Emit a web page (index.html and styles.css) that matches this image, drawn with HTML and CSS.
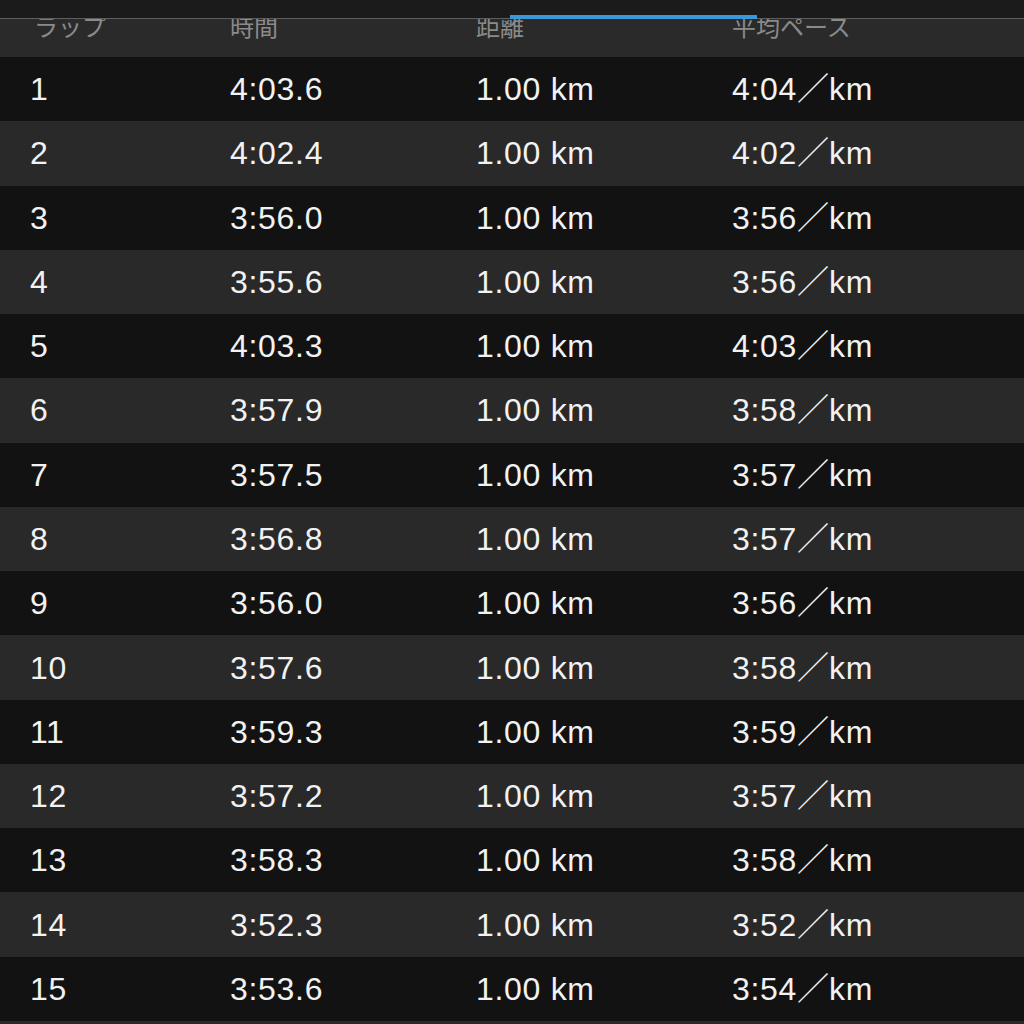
FILE: index.html
```html
<!DOCTYPE html>
<html lang="ja">
<head>
<meta charset="utf-8">
<link rel="stylesheet" href="styles.css">
</head>
<body>
<div class="screen">
  <div class="topbar">
    <div class="indicator"></div>
  </div>
  <div class="table">
    <div class="row head">
      <div>ラップ</div><div>時間</div><div>距離</div><div>平均ペース</div>
    </div>
    <div class="row odd"><div>1</div><div>4:03.6</div><div>1.00 km</div><div>4:04<span class="sl">／</span>km</div></div>
    <div class="row even"><div>2</div><div>4:02.4</div><div>1.00 km</div><div>4:02<span class="sl">／</span>km</div></div>
    <div class="row odd"><div>3</div><div>3:56.0</div><div>1.00 km</div><div>3:56<span class="sl">／</span>km</div></div>
    <div class="row even"><div>4</div><div>3:55.6</div><div>1.00 km</div><div>3:56<span class="sl">／</span>km</div></div>
    <div class="row odd"><div>5</div><div>4:03.3</div><div>1.00 km</div><div>4:03<span class="sl">／</span>km</div></div>
    <div class="row even"><div>6</div><div>3:57.9</div><div>1.00 km</div><div>3:58<span class="sl">／</span>km</div></div>
    <div class="row odd"><div>7</div><div>3:57.5</div><div>1.00 km</div><div>3:57<span class="sl">／</span>km</div></div>
    <div class="row even"><div>8</div><div>3:56.8</div><div>1.00 km</div><div>3:57<span class="sl">／</span>km</div></div>
    <div class="row odd"><div>9</div><div>3:56.0</div><div>1.00 km</div><div>3:56<span class="sl">／</span>km</div></div>
    <div class="row even"><div>10</div><div>3:57.6</div><div>1.00 km</div><div>3:58<span class="sl">／</span>km</div></div>
    <div class="row odd"><div>11</div><div>3:59.3</div><div>1.00 km</div><div>3:59<span class="sl">／</span>km</div></div>
    <div class="row even"><div>12</div><div>3:57.2</div><div>1.00 km</div><div>3:57<span class="sl">／</span>km</div></div>
    <div class="row odd"><div>13</div><div>3:58.3</div><div>1.00 km</div><div>3:58<span class="sl">／</span>km</div></div>
    <div class="row even"><div>14</div><div>3:52.3</div><div>1.00 km</div><div>3:52<span class="sl">／</span>km</div></div>
    <div class="row odd"><div>15</div><div>3:53.6</div><div>1.00 km</div><div>3:54<span class="sl">／</span>km</div></div>
    <div class="row even"><div></div><div></div><div></div><div></div></div>
  </div>
</div>
</body>
</html>
```

FILE: styles.css
```css
html, body {
  margin: 0;
  padding: 0;
  background: #121212;
}
.screen {
  width: 1024px;
  height: 1024px;
  overflow: hidden;
  font-family: "Liberation Sans", "Noto Sans CJK JP", sans-serif;
  color: #f2f2f2;
}
.topbar {
  position: relative;
  height: 18px;
  background: #1b1b1b;
  border-bottom: 1px solid #5e5e5e;
}
.indicator {
  position: absolute;
  left: 510px;
  top: 15px;
  width: 247px;
  height: 4px;
  background: #3a98d8;
}
.table {
  display: flex;
  flex-direction: column;
}
.row {
  display: grid;
  grid-template-columns: 200px 246px 256px 1fr;
  padding-left: 30px;
  align-items: center;
  height: 64.27px;
  font-size: 32px;
  line-height: 36px;
  letter-spacing: 0.7px;
  white-space: nowrap;
}
.row.odd { background: #121212; }
.row.even { background: #292929; }
.sl {
  font-family: "Noto Sans CJK JP", sans-serif;
  line-height: 0;
  letter-spacing: 0;
}
.row.head {
  height: 38px;
  align-items: start;
  overflow: hidden;
  background: #2a2a2a;
  color: #8a8a8a;
  font-family: "Noto Sans CJK JP", sans-serif;
  font-size: 24px;
  line-height: 24px;
  letter-spacing: 0;
}
.row.head > div {
  margin-top: -5px;
}
.row.head > div:first-child {
  padding-left: 4px;
}
```
